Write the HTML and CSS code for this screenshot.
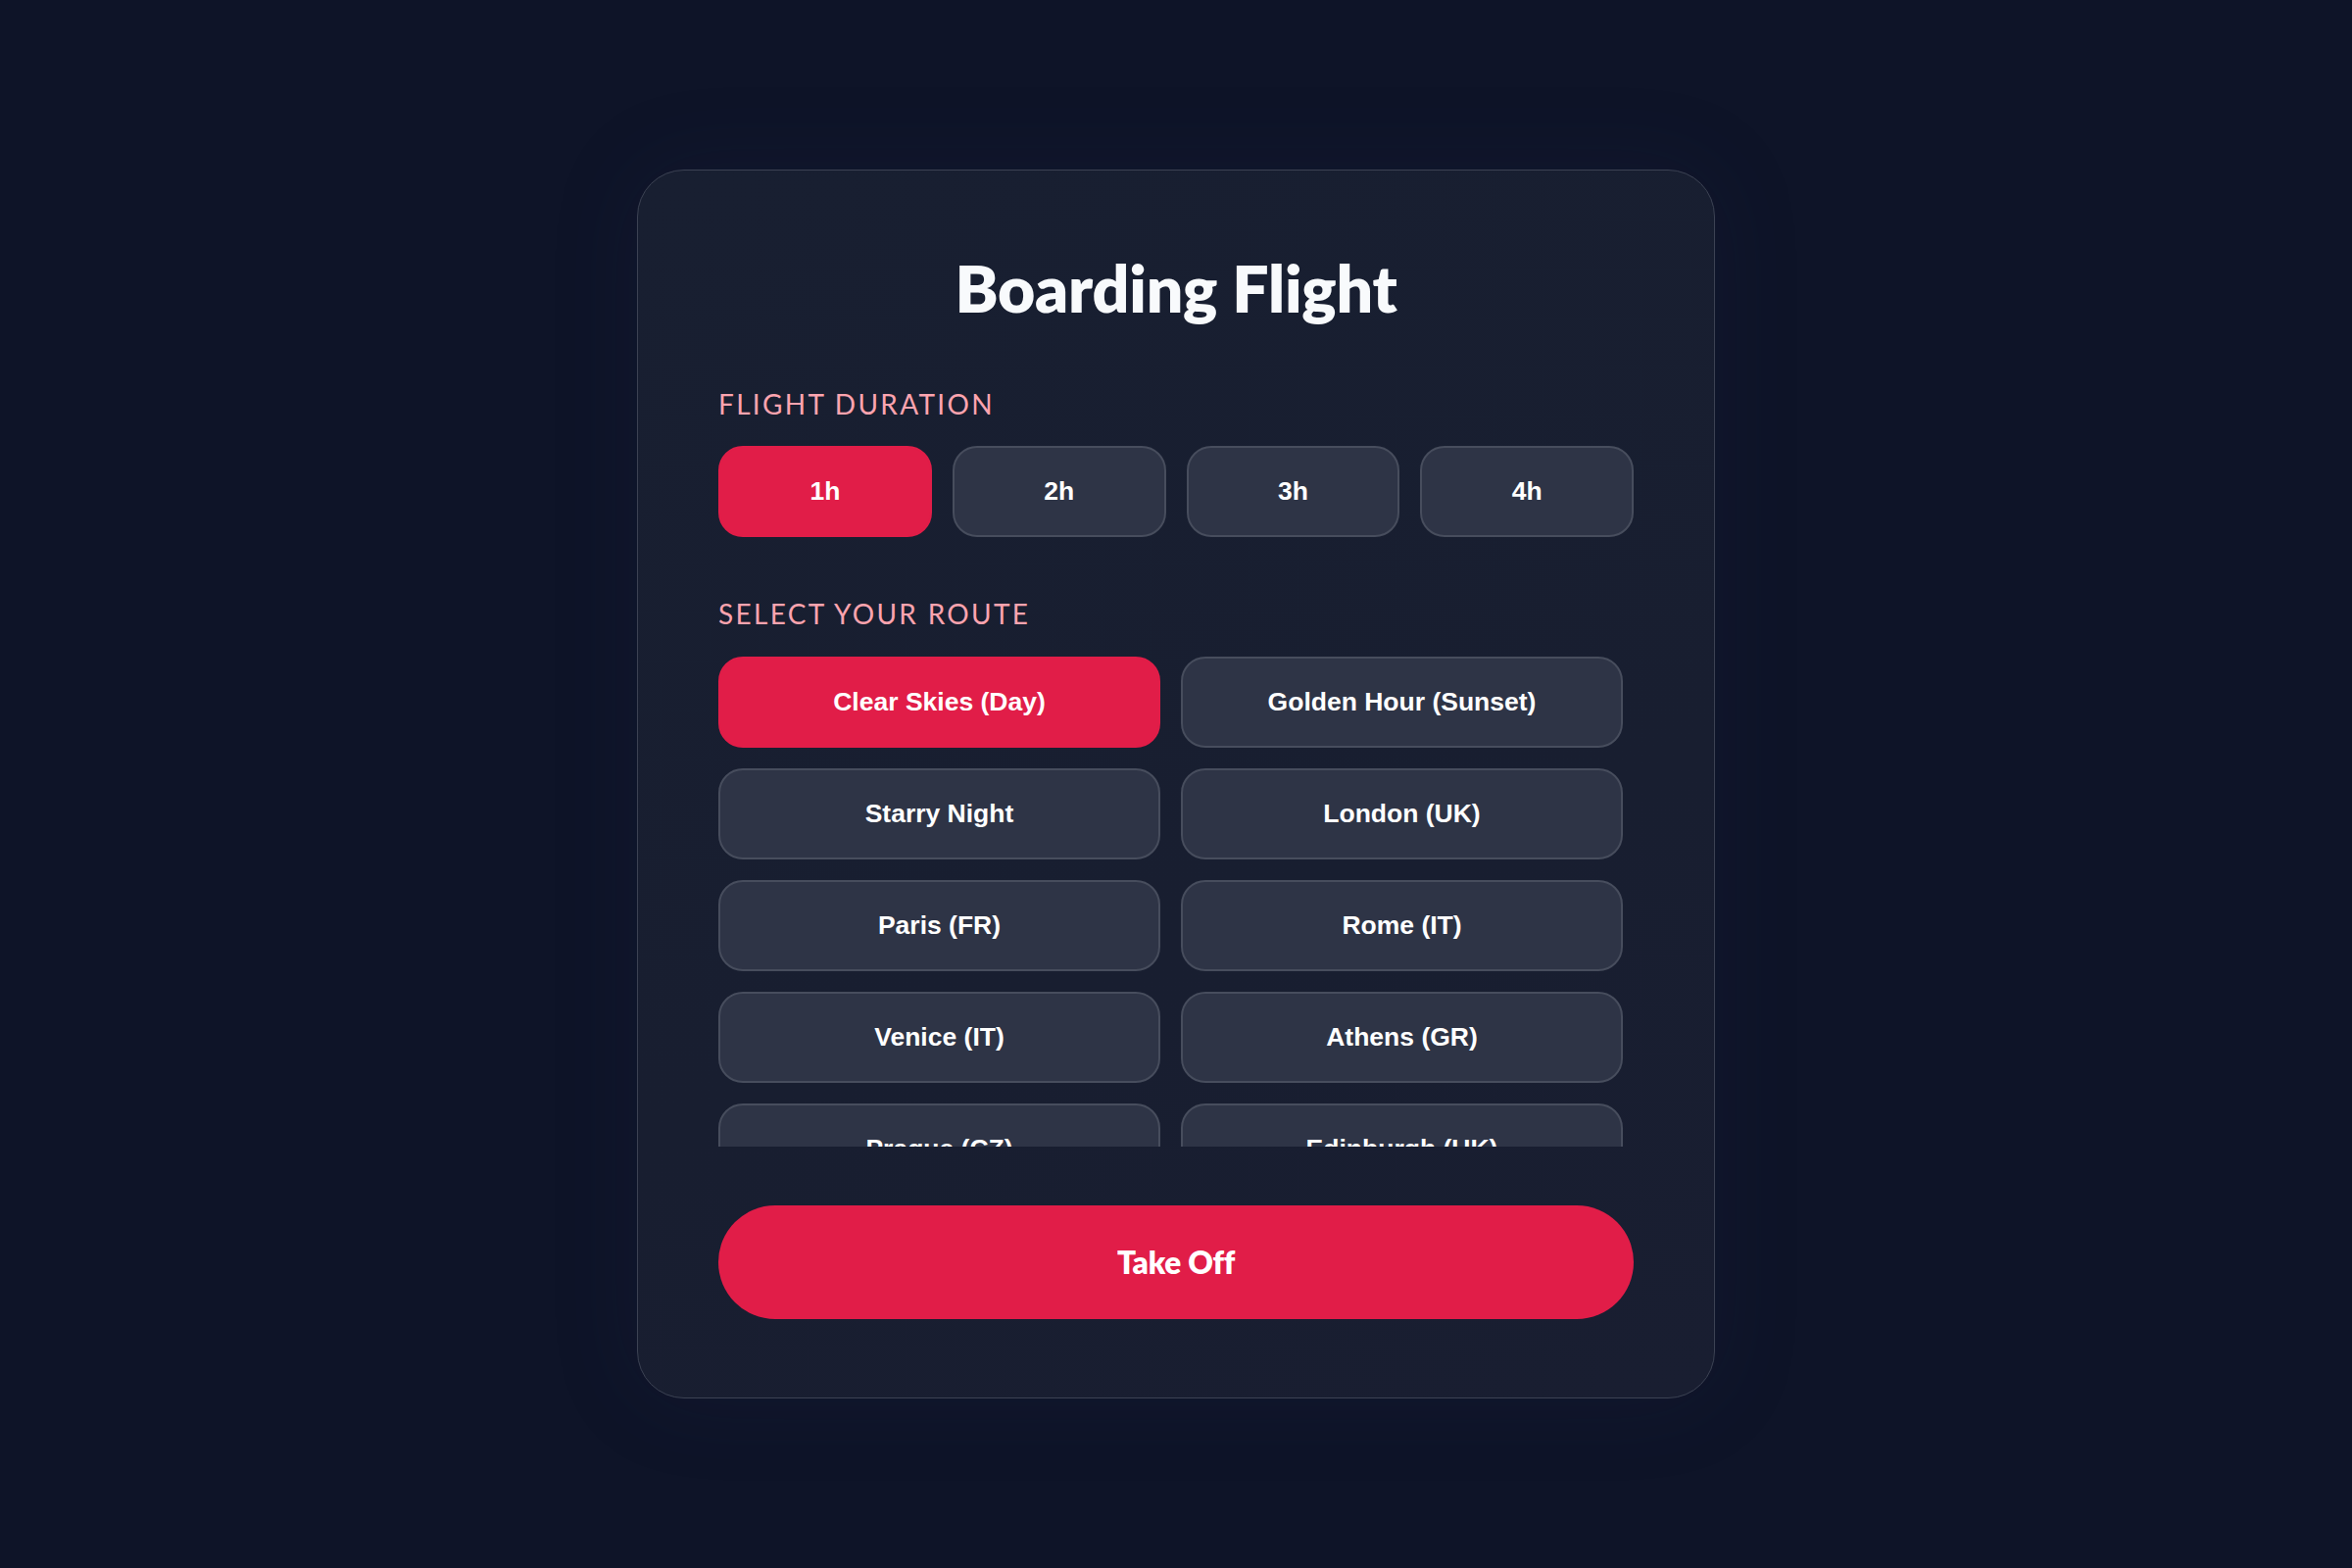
FILE: index.html
```html
<!DOCTYPE html>
<html lang="en">
<head>
<meta charset="utf-8">
<title>Boarding Flight</title>
<link rel="stylesheet" href="styles.css">
</head>
<body>
<main class="card">
  <h1 class="title">Boarding Flight</h1>

  <section class="section">
    <h2 class="label">FLIGHT DURATION</h2>
    <div class="durations">
      <button class="opt active">1h</button>
      <button class="opt">2h</button>
      <button class="opt">3h</button>
      <button class="opt">4h</button>
    </div>
  </section>

  <section class="section">
    <h2 class="label">SELECT YOUR ROUTE</h2>
    <div class="routes-wrap">
      <div class="routes">
        <button class="opt active">Clear Skies (Day)</button>
        <button class="opt">Golden Hour (Sunset)</button>
        <button class="opt">Starry Night</button>
        <button class="opt">London (UK)</button>
        <button class="opt">Paris (FR)</button>
        <button class="opt">Rome (IT)</button>
        <button class="opt">Venice (IT)</button>
        <button class="opt">Athens (GR)</button>
        <button class="opt">Prague (CZ)</button>
        <button class="opt">Edinburgh (UK)</button>
      </div>
    </div>
  </section>

  <button class="takeoff">Take Off</button>
</main>
</body>
</html>
```

FILE: styles.css
```css
* { box-sizing: border-box; }

html, body {
  margin: 0;
  padding: 0;
}

body {
  min-height: 100vh;
  background: #0e1428;
  display: flex;
  align-items: center;
  justify-content: center;
  font-family: "Lato", "Inter", sans-serif;
}

.card {
  width: 1100px;
  padding: 80px 82px;
  background: linear-gradient(160deg, #181f31 0%, #181e30 60%, #191e31 100%);
  border: 1.5px solid #3c4253;
  border-radius: 48px;
  box-shadow: 0 0 90px rgba(36, 46, 78, 0.16);
  display: flex;
  flex-direction: column;
}

.title {
  margin: 0 0 62px;
  text-align: center;
  font-family: "Lato", sans-serif;
  font-weight: 800;
  font-size: 66px;
  line-height: 1.2;
  letter-spacing: -0.2px;
  color: #f8fafc;
}

.section {
  display: flex;
  flex-direction: column;
}

.section + .section {
  margin-top: 62px;
}

.label {
  margin: 0 0 26px;
  font-family: "Lato", sans-serif;
  font-weight: 400;
  font-size: 28px;
  line-height: 1.2;
  letter-spacing: 2.3px;
  color: #fda4af;
}

.durations {
  display: grid;
  grid-template-columns: repeat(4, 1fr);
  gap: 21px;
}

.routes-wrap {
  height: 500px;
  overflow: hidden;
  padding-right: 11px;
}

.routes {
  display: grid;
  grid-template-columns: 1fr 1fr;
  gap: 21px;
}

.opt {
  height: 93px;
  margin: 0;
  padding: 0 16px;
  display: flex;
  align-items: center;
  justify-content: center;
  background: #2e3446;
  border: 2px solid #474d5d;
  border-radius: 25px;
  color: #ffffff;
  font-family: "Liberation Sans", Arial, sans-serif;
  font-weight: 700;
  font-size: 26.5px;
  cursor: pointer;
}

.opt.active {
  background: #e11d48;
  border-color: #e11d48;
}

.takeoff {
  margin-top: 60px;
  height: 116px;
  width: 100%;
  border: none;
  border-radius: 999px;
  background: #e11d48;
  color: #ffffff;
  font-family: "Lato", sans-serif;
  font-weight: 800;
  font-size: 31.5px;
  letter-spacing: -0.2px;
  cursor: pointer;
}
```
